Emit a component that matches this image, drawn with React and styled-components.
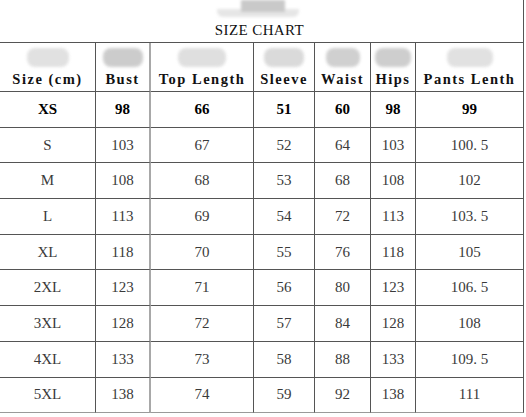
import React from 'react';
import styled, { createGlobalStyle } from 'styled-components';

const GlobalStyle = createGlobalStyle`
  html, body {
    margin: 0;
    padding: 0;
    background: #ffffff;
  }
  body {
    width: 526px;
    height: 417px;
    overflow: hidden;
  }
`;

const COLUMNS = [96, 55, 103, 61, 56, 45, 108];

const HEADERS = [
  { label: 'Size (cm)', blob: 42, shade: '#dcdcdc' },
  { label: 'Bust', blob: 40, shade: '#c4c4c4' },
  { label: 'Top Length', blob: 48, shade: '#dadada' },
  { label: 'Sleeve', blob: 40, shade: '#d4d4d4' },
  { label: 'Waist', blob: 34, shade: '#c8c8c8' },
  { label: 'Hips', blob: 36, shade: '#c6c6c6' },
  { label: 'Pants Lenth', blob: 46, shade: '#dcdcdc' },
];

const ROWS = [
  ['XS', '98', '66', '51', '60', '98', '99'],
  ['S', '103', '67', '52', '64', '103', '100. 5'],
  ['M', '108', '68', '53', '68', '108', '102'],
  ['L', '113', '69', '54', '72', '113', '103. 5'],
  ['XL', '118', '70', '55', '76', '118', '105'],
  ['2XL', '123', '71', '56', '80', '123', '106. 5'],
  ['3XL', '128', '72', '57', '84', '128', '108'],
  ['4XL', '133', '73', '58', '88', '133', '109. 5'],
  ['5XL', '138', '74', '59', '92', '138', '111'],
];

const Chart = styled.div`
  display: grid;
  grid-template-columns: ${COLUMNS.map((w) => `${w}px`).join(' ')};
  grid-template-rows: 43px 49px repeat(9, 35.7px);
  width: 524px;
`;

const TitleCell = styled.div`
  grid-column: 1 / -1;
  box-sizing: border-box;
  border-right: 1px solid #555555;
  border-bottom: 1px solid #555555;
  display: flex;
  flex-direction: column;
  align-items: center;
  justify-content: flex-end;
  padding-bottom: 4px;
  padding-right: 4px;
`;

const Title = styled.div`
  font-family: 'Liberation Serif', 'Times New Roman', serif;
  font-size: 15px;
  line-height: 16px;
  letter-spacing: 0.4px;
  color: #111111;
`;

const TitleBlur = styled.div`
  width: 82px;
  height: 19px;
  margin-left: -4px;
  margin-bottom: 5px;
  background:
    linear-gradient(#c9c9c9, #c9c9c9) 24px 0 / 44px 12px no-repeat,
    linear-gradient(#e6e6e6, #e6e6e6) 0 9px / 82px 9px no-repeat;
  border-radius: 6px;
  filter: blur(1.5px);
`;

const Cell = styled.div`
  box-sizing: border-box;
  border-right: ${(p) => (p.$soft ? '2px solid #a8a8a8' : '1px solid #555555')};
  border-bottom: 1px solid ${(p) => (p.$last ? '#9a9a9a' : '#555555')};
  display: flex;
  align-items: center;
  justify-content: center;
  font-family: 'Liberation Serif', 'Times New Roman', serif;
  font-size: 15px;
  color: ${(p) => (p.$bold ? '#000000' : '#3a3a3a')};
  font-weight: ${(p) => (p.$bold ? 700 : 400)};
  white-space: nowrap;
`;

const HeadCell = styled(Cell)`
  flex-direction: column;
  justify-content: flex-end;
  padding-bottom: 4px;
`;

const HeadBlur = styled.div`
  width: ${(p) => p.$w}px;
  height: 19px;
  margin-bottom: 4px;
  background: ${(p) => p.$shade};
  border-radius: 8px;
  filter: blur(1.5px);
  opacity: 0.85;
`;

const HeadLabel = styled.div`
  font-family: 'Liberation Serif', 'Times New Roman', serif;
  font-size: 14.5px;
  line-height: 16px;
  font-weight: 700;
  letter-spacing: 1.5px;
  color: #111111;
`;

const App = () => (
  <>
    <GlobalStyle />
    <Chart>
      <TitleCell>
        <TitleBlur />
        <Title>SIZE CHART</Title>
      </TitleCell>
      {HEADERS.map((h, i) => (
        <HeadCell key={h.label} $soft={i === 1}>
          <HeadBlur $w={h.blob} $shade={h.shade} />
          <HeadLabel>{h.label}</HeadLabel>
        </HeadCell>
      ))}
      {ROWS.map((row, r) =>
        row.map((value, c) => (
          <Cell
            key={`${r}-${c}`}
            $soft={c === 1}
            $bold={r === 0}
            $last={r === ROWS.length - 1}
          >
            {value}
          </Cell>
        ))
      )}
    </Chart>
  </>
);

export default App;
